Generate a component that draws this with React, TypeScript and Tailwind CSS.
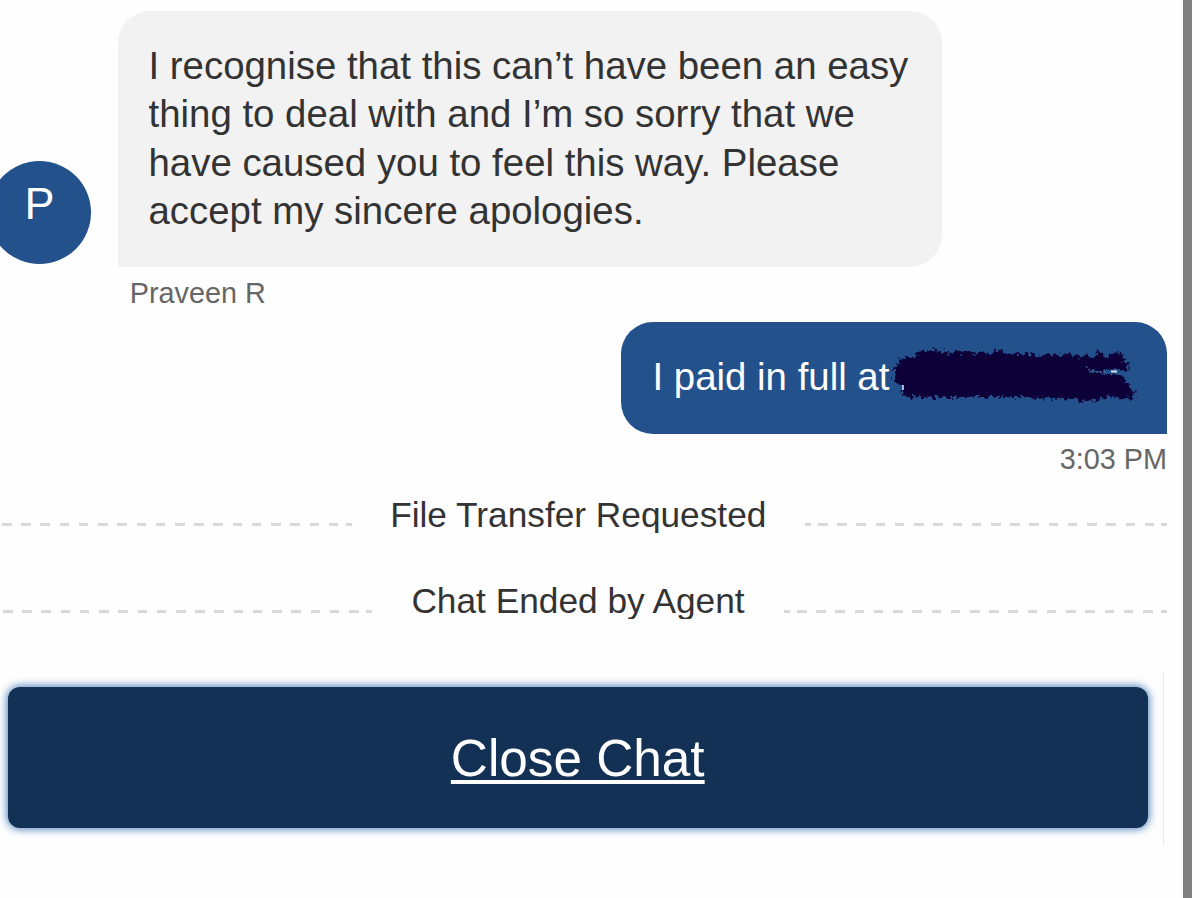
import type { ReactNode } from "react"
import clsx from "clsx"

export default function App() {
  return (
    <main className="flex h-[898px] w-[1200px] overflow-hidden bg-[#fefefe] font-['Liberation_Sans',Arial,sans-serif] text-[#333333]">
      <div className="flex w-[1183px] shrink-0 flex-col">
        {/* Agent message */}
        <div className="flex h-[267px] items-end pt-[11px]">
          <Avatar letter="P" />
          <Bubble className="ml-[26.5px] h-[256px] w-[824.5px] rounded-[32px] rounded-bl-none bg-[#f2f2f3] pt-[31.1px] pl-[31px]">
            I recognise that this can’t have been an easy
            <br />
            thing to deal with and I’m so sorry that we
            <br />
            have caused you to feel this way. Please
            <br />
            accept my sincere apologies.
          </Bubble>
        </div>
        <p className="mt-[7.7px] h-[47.1px] pl-[129.8px] text-[28.8px] leading-9 text-[#666666]">Praveen R</p>

        {/* Customer message */}
        <Bubble className="ml-[620.5px] flex h-[112px] w-[546.5px] rounded-[32px] rounded-br-none bg-[#23518b] pt-[31.1px] pl-8 text-white">
          <span>I paid in full at</span>
          <Scribble />
        </Bubble>
        <p className="mt-[6.9px] h-[54.3px] pr-4 text-right text-[28.8px] leading-9 text-[#666666]">3:03 PM</p>

        {/* Chat events */}
        <Divider leftWidth="w-[351.5px]" leftPad="pl-[2px]" rightWidth="w-[362px]" gap="mb-[48.5px]">
          File Transfer Requested
        </Divider>
        <Divider leftWidth="w-[372px]" leftPad="pl-[2.8px]" rightWidth="w-[383px]" gap="mb-[52.8px]">
          Chat Ended by Agent
        </Divider>

        {/* Footer */}
        <div className="flex h-[173px] w-[1164px] border-r-[1.5px] border-[#e9e7e8] pt-[15px] pl-[7.5px]">
          <button className="h-[141px] w-[1140.5px] rounded-xl bg-[#133155] pt-[3px] text-[51.3px] leading-[60px] text-white shadow-[0_0_8px_1px_#4a7db8]">
            <span className="underline decoration-[3.5px] underline-offset-[4px] [text-decoration-skip-ink:none]">
              Close Chat
            </span>
          </button>
        </div>
      </div>

      {/* Window edge */}
      <div className="w-[8.5px] bg-[#808080]" />
    </main>
  )
}

function Avatar({ letter }: { letter: string }) {
  return (
    <div className="mb-[2.6px] -ml-3 flex h-[103px] w-[103px] shrink-0 justify-center rounded-full bg-[#23518b] pt-[14.9px] text-[45px] leading-[56px] text-white">
      {letter}
    </div>
  )
}

function Bubble({ className, children }: { className: string; children: ReactNode }) {
  return (
    <div className={clsx("shrink-0 text-[38.4px] leading-[48.35px] whitespace-nowrap", className)}>{children}</div>
  )
}

type DividerProps = {
  leftWidth: string
  leftPad: string
  rightWidth: string
  gap: string
  children: ReactNode
}

function Divider({ leftWidth, leftPad, rightWidth, gap, children }: DividerProps) {
  return (
    <div className={clsx("flex h-[38px] w-[1167px] shrink-0 justify-between overflow-hidden", gap)}>
      <div className={clsx("mt-[28.5px] flex h-[3px] shrink-0", leftWidth, leftPad)}>
        <Dashes />
        <ShortDash />
      </div>
      <span className="text-[35.25px] leading-10 whitespace-nowrap">{children}</span>
      <div className={clsx("mt-[28.5px] flex h-[3px] shrink-0", rightWidth)}>
        <ShortDash />
        <div className="w-[7px]" />
        <Dashes />
        <ShortDash />
      </div>
    </div>
  )
}

function Dashes() {
  return (
    <div className="flex-1 bg-[repeating-linear-gradient(90deg,#d9d9d9_0_9.6px,transparent_9.6px_19.22px)]" />
  )
}

function ShortDash() {
  return <div className="w-[6px] shrink-0 bg-[#d9d9d9]" />
}

function Scribble() {
  return (
    <svg className="-mt-[10px] ml-[1px] h-[64px] w-[250px]" viewBox="890 342 250 64" fill="none">
      <defs>
        <filter id="chalk" x="-5%" y="-20%" width="110%" height="140%">
          <feTurbulence type="fractalNoise" baseFrequency="0.28" numOctaves="2" seed="9" result="noise" />
          <feDisplacementMap in="SourceGraphic" in2="noise" scale="10" xChannelSelector="R" yChannelSelector="G" />
          <feGaussianBlur stdDeviation="0.5" />
        </filter>
      </defs>
      <path
        d="M894 366 L899 364 L897 357 L903 359 L907 355 L911 358 L915 356 L916 350 L921 352 L926 349 L931 351 L935 347 L939 352 L945 350 L950 353 L957 349 L961 352 L969 350 L975 353 L983 351 L990 353 L1000 349 L1006 353 L1014 352 L1022 354 L1030 352 L1040 355 L1050 353 L1060 354 L1070 352 L1080 356 L1087 354 L1092 358 L1098 351 L1103 352 L1106 357 L1110 352 L1121 351 L1124 357 L1122 361 L1128 362 L1127 371 L1121 369 L1100 370 L1088 367 L1090 371 L1120 373 L1125 378 L1123 382 L1131 382 L1129 388 L1135 389 L1133 398 L1127 396 L1122 399 L1117 395 L1105 396 L1098 400 L1090 399 L1084 401 L1076 398 L1060 398 L1040 397 L1020 396 L980 396 L950 396 L916 396 L903 396 L904 384 L897 384 L894 378 Z"
        fill="#100238"
        filter="url(#chalk)"
      />
      <path d="M1092 371 L1106 371 M1086 365 L1089 369" stroke="#6983ac" strokeWidth="1" strokeDasharray="2 2" />
      <path d="M1111 370.5 L1117 370.5" stroke="#d5dff0" strokeWidth="2" />
      <path d="M903 384 L903 389" stroke="#b9c8e0" strokeWidth="1.8" />
    </svg>
  )
}
